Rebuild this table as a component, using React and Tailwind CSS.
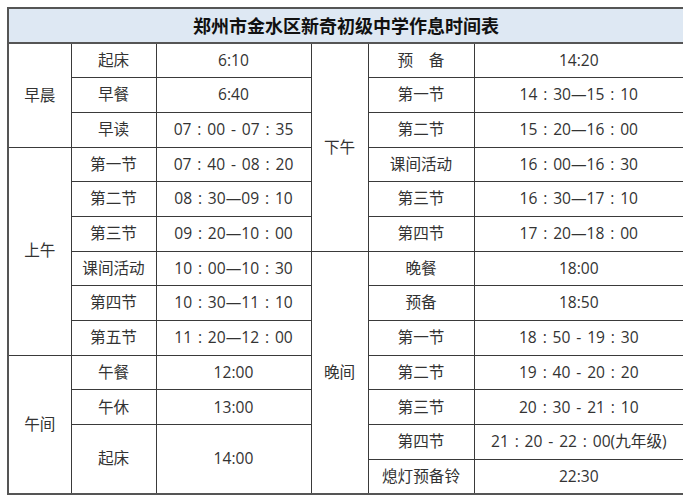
import React from 'react';

const left = [
    { group: '早晨', span: 3, items: [['起床', '6:10'], ['早餐', '6:40'], ['早读', '07 : 00 - 07 : 35']] },
    {
        group: '上午', span: 6, items: [
            ['第一节', '07 : 40 - 08 : 20'],
            ['第二节', '08 : 30—09 : 10'],
            ['第三节', '09 : 20—10 : 00'],
            ['课间活动', '10 : 00—10 : 30'],
            ['第四节', '10 : 30—11 : 10'],
            ['第五节', '11 : 20—12 : 00'],
        ]
    },
    { group: '午间', span: 4, items: [['午餐', '12:00'], ['午休', '13:00'], ['起床', '14:00', 2]] },
];

const right = [
    {
        group: '下午', span: 6, items: [
            ['预　备', '14:20'],
            ['第一节', '14 : 30—15 : 10'],
            ['第二节', '15 : 20—16 : 00'],
            ['课间活动', '16 : 00—16 : 30'],
            ['第三节', '16 : 30—17 : 10'],
            ['第四节', '17 : 20—18 : 00'],
        ]
    },
    {
        group: '晚间', span: 7, items: [
            ['晚餐', '18:00'],
            ['预备', '18:50'],
            ['第一节', '18 : 50 - 19 : 30'],
            ['第二节', '19 : 40 - 20 : 20'],
            ['第三节', '20 : 30 - 21 : 10'],
            ['第四节', '21 : 20 - 22 : 00(九年级)'],
            ['熄灯预备铃', '22:30'],
        ]
    },
];

// flatten a side into 13 row slots: each slot holds the cells that start in it
const flatten = (groups) => {
    const slots = Array.from({ length: 13 }, () => []);
    let r = 0;
    groups.forEach((g) => {
        slots[r].push({ text: g.group, rows: g.span, kind: 'group' });
        g.items.forEach(([name, time, rows = 1]) => {
            slots[r].push({ text: name, rows, kind: 'name' });
            slots[r].push({ text: time, rows, kind: 'time' });
            r += rows;
        });
    });
    return slots;
};

const cell = 'border border-[#3a3a3a] text-center align-middle p-0';

const App = () => {
    const l = flatten(left);
    const rr = flatten(right);

    return (
        <div className="w-[694px] h-[500px] bg-white pt-[7px] pl-[7px]" style={{ fontFamily: '"Open Sans", "Noto Sans CJK SC", sans-serif' }}>
            <table className="table-fixed border-collapse w-[675px] text-[15.6px] text-[#333] border-t-2 border-l-2 border-b-2 border-[#555]">
                <colgroup>
                    <col className="w-[63px]" />
                    <col className="w-[85px]" />
                    <col className="w-[155px]" />
                    <col className="w-[57px]" />
                    <col className="w-[106px]" />
                    <col className="w-[209px]" />
                </colgroup>
                <thead>
                    <tr className="h-[35px]">
                        <th colSpan={6} className="bg-[#dee8f3] border-b-2 border-[#555] text-[18px] font-bold text-[#111] text-center p-0" style={{ fontFamily: '"Noto Sans CJK SC", sans-serif' }}>
                            郑州市金水区新奇初级中学作息时间表
                        </th>
                    </tr>
                </thead>
                <tbody>
                    {l.map((slot, i) => (
                        <tr key={i} className="h-[34.7px]">
                            {slot.map((c, j) => (
                                <td key={'l' + j} rowSpan={c.rows} className={`${cell} ${c.kind === 'time' ? '[word-spacing:1.8px]' : ''}`}>{c.text}</td>
                            ))}
                            {rr[i].map((c, j) => (
                                <td key={'r' + j} rowSpan={c.rows} className={`${cell} ${c.kind === 'time' ? 'border-r-0 [word-spacing:1.8px]' : ''}`}>{c.text}</td>
                            ))}
                        </tr>
                    ))}
                </tbody>
            </table>
        </div>
    );
};

export default App;
